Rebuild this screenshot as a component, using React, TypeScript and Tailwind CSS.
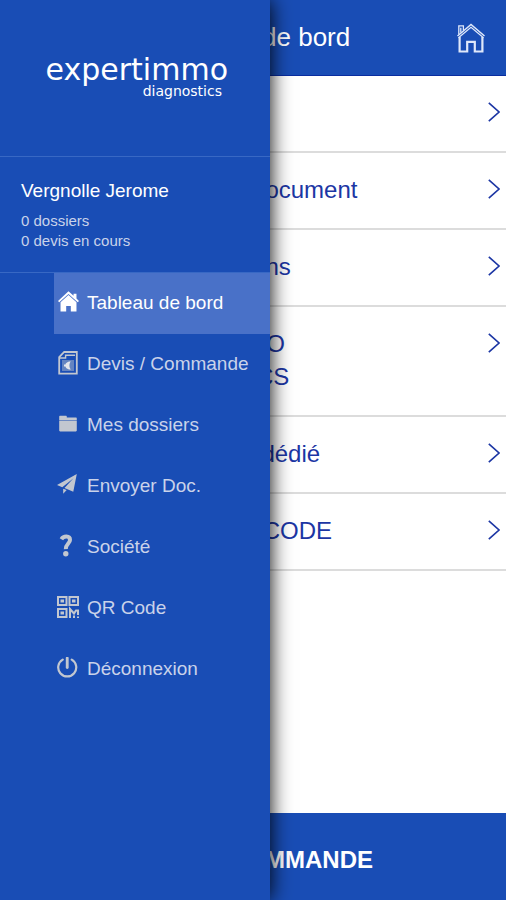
import React from "react";

const HomeIcon = () => (
  <svg viewBox="0 0 20 20" className="size-[21px]" fill="currentColor" aria-hidden="true">
    <path d="M10 .2 14.8 4.600V2.600h2.800v4.600L20 9.500l-1.200 1.300L10 2.900 1.200 10.800 0 9.500z" />
    <path d="M10 3.700 2.400 10.600V19.600h5.400v-5.400h4.400v5.400h5.400v-9z" />
  </svg>
);

const QuoteIcon = () => (
  <svg viewBox="0 0 20 24" className="w-5 h-6" fill="none" stroke="currentColor" strokeWidth="1.8" aria-hidden="true">
    <path d="M1.2 6.2 6.2 1h12.6v21.6H1.2z" />
    <path d="M2 7h5.6V4.2H17" strokeWidth="1.4" />
    <path d="M4 9h12v11H4z" fill="currentColor" stroke="none" opacity=".45" />
    <path d="M12.8 10.600c-4 0-5 2-5.300 3H6v1.800h1.500c.3 1 1.300 3 5.300 3-1.800-1.600-1.800-6.200 0-7.800z" fill="#e4e6ec" stroke="none" />
  </svg>
);

const FolderIcon = () => (
  <svg viewBox="0 0 20 20" className="size-5" fill="currentColor" aria-hidden="true">
    <path d="M1.2 2.8c0-.6.4-1 1-1h5.6c.6 0 1 .4 1 1v.8h9c.6 0 1 .4 1 1v1.8H1.2z" />
    <path d="M1.2 7h17.6v9.6c0 .5-.4.8-.9.8H2.1c-.5 0-.9-.3-.9-.8z" />
  </svg>
);

const SendIcon = () => (
  <svg viewBox="0 0 20 20" className="size-[22px]" fill="currentColor" aria-hidden="true">
    <path d="M18 0 0 10l4.800 2L15 3.900 6.800 12.800l8 3.400z" />
    <path d="M5.600 13.400v4.600l3.200-3.400z" />
  </svg>
);

const QuestionIcon = () => (
  <svg viewBox="0 0 20 24" className="w-5 h-6" fill="none" stroke="currentColor" aria-hidden="true">
    <path d="M3.400 5.200C5.400 1.800 12 1.400 12 6c0 3.400-4.400 4-4.200 9.200" strokeWidth="4" />
    <circle cx="7.800" cy="19.800" r="2.700" fill="currentColor" stroke="none" />
  </svg>
);

const QrIcon = () => (
  <svg viewBox="0 0 24 24" className="size-6" fill="none" stroke="currentColor" strokeWidth="2" aria-hidden="true">
    <path d="M2 2h8.500v8H2zM13.500 2H22v8h-8.500zM2 14h8.500v8H2z" />
    <path d="M4.500 4.500h3.500v3H4.500zM16 4.500h3.500v3H16zM4.500 16.500h3.500v3H4.500z" fill="currentColor" stroke="none" />
    <path d="M14 23v-9l4 4.500 2-3h3M22 16v4M18 20.500V23M22 21.500V23" />
  </svg>
);

const PowerIcon = () => (
  <svg viewBox="0 0 20 20" className="size-[22px]" fill="none" stroke="currentColor" strokeWidth="2" strokeLinecap="round" aria-hidden="true">
    <path d="M5.200 2.400a8.200 8.200 0 1 0 8.200 0" />
    <path d="M9.300 1v8.500" strokeWidth="2.600" />
  </svg>
);

const HomeOutlineIcon = () => (
  <svg viewBox="0 0 30 32" className="w-[30px] h-8" fill="none" stroke="currentColor" aria-hidden="true">
    <path d="M1.500 14 15 2.500 28.500 14" strokeWidth="1.500" />
    <path d="M2.500 15.800 15 5.300l12.500 10.500" strokeWidth="1.200" />
    <path d="M2.800 12.500V3.800h4.600v4.500M4.800 10.500V5.800" strokeWidth="1.300" />
    <path d="M3.600 15v14.500h7.600v-9.700h7.600v9.700h7.600V15" strokeWidth="2.200" />
  </svg>
);

const ChevronIcon = () => (
  <svg viewBox="0 0 12 20" className="w-3 h-5 shrink-0" fill="none" stroke="currentColor" strokeWidth="1.600" aria-hidden="true">
    <path d="M.8.8 11 10 .8 19.200" />
  </svg>
);

const menu = [
  { label: "Tableau de bord", icon: HomeIcon },
  { label: "Devis / Commande", icon: QuoteIcon },
  { label: "Mes dossiers", icon: FolderIcon },
  { label: "Envoyer Doc.", icon: SendIcon },
  { label: "Société", icon: QuestionIcon },
  { label: "QR Code", icon: QrIcon },
  { label: "Déconnexion", icon: PowerIcon },
];

const rows = [
  ["Mes dossiers"],
  ["Envoyer un document"],
  ["Nos prestations"],
  ["EXPERTIMMO", "DIAGNOSTICS"],
  ["Mon contact dédié"],
  ["Scanner QR CODE"],
];

const Dashboard = () => {
  return (
    <div className="flex flex-col min-h-screen">
      <header className="relative flex items-center justify-center h-[76px] pl-2 bg-[#194db5] border-b border-[#0a2da0] text-white">
        <h1 className="text-[26px]">Tableau de bord</h1>
        <a href="#accueil" aria-label="Accueil" className="absolute right-5 text-[#dfe8fa]">
          <HomeOutlineIcon />
        </a>
      </header>
      <main className="flex-1 text-[#1c36a4]">
        {rows.map((lines) => (
          <a href="#rubrique" key={lines[0]} className="flex items-start justify-between pl-[124px] pr-1.5 pt-5 pb-[22px] border-b-2 border-[#dcdcdc]">
            <span className="text-2xl leading-[33px]">
              {lines.map((line) => (
                <span className="block" key={line}>{line}</span>
              ))}
            </span>
            <span className="py-1.5">
              <ChevronIcon />
            </span>
          </a>
        ))}
      </main>
      <button type="button" className="h-[87px] pt-1.5 pl-1 text-2xl font-bold text-white bg-[#194db5]">
        DEVIS / COMMANDE
      </button>
    </div>
  );
};

const Drawer = () => {
  return (
    <aside className="absolute inset-y-0 left-0 w-[270px] bg-[#194db5] text-white shadow-[0_0_20px_#000]">
      <div className="flex flex-col items-end h-[156px] pt-[54px] pr-[42px] font-['DejaVu_Sans',sans-serif]">
        <span className="text-[30px] leading-8">expertimmo</span>
        <span className="pr-1.5 text-sm leading-[10px]">diagnostics</span>
      </div>
      <div className="h-[117px] px-[21px] pt-[22px] border-y border-[#3868c4]">
        <p className="text-[19px] leading-6">Vergnolle Jerome</p>
        <div className="pt-2 text-[15px] leading-5 text-[#c9d3ea]">
          <p>0 dossiers</p>
          <p>0 devis en cours</p>
        </div>
      </div>
      <nav className="flex flex-col pl-[54px]">
        {menu.map(({ label, icon: Icon }, index) => (
          <a
            href="#menu"
            key={label}
            className={`flex items-center gap-[7px] h-[61px] pl-0.5 text-[19px] ${index === 0 ? "bg-[#4971c8] text-white" : "text-[#c9d3ea]"}`}
          >
            <span className={`flex items-center justify-center w-6 h-7 pb-1 ${index === 0 ? "text-white" : "text-[#c2c7d0]"}`}>
              <Icon />
            </span>
            {label}
          </a>
        ))}
      </nav>
    </aside>
  );
};

const App = () => {
  return (
    <div className="relative min-h-screen overflow-hidden bg-white font-['Liberation_Sans',Arial,sans-serif]">
      <Dashboard />
      <Drawer />
    </div>
  );
};

export default App;
